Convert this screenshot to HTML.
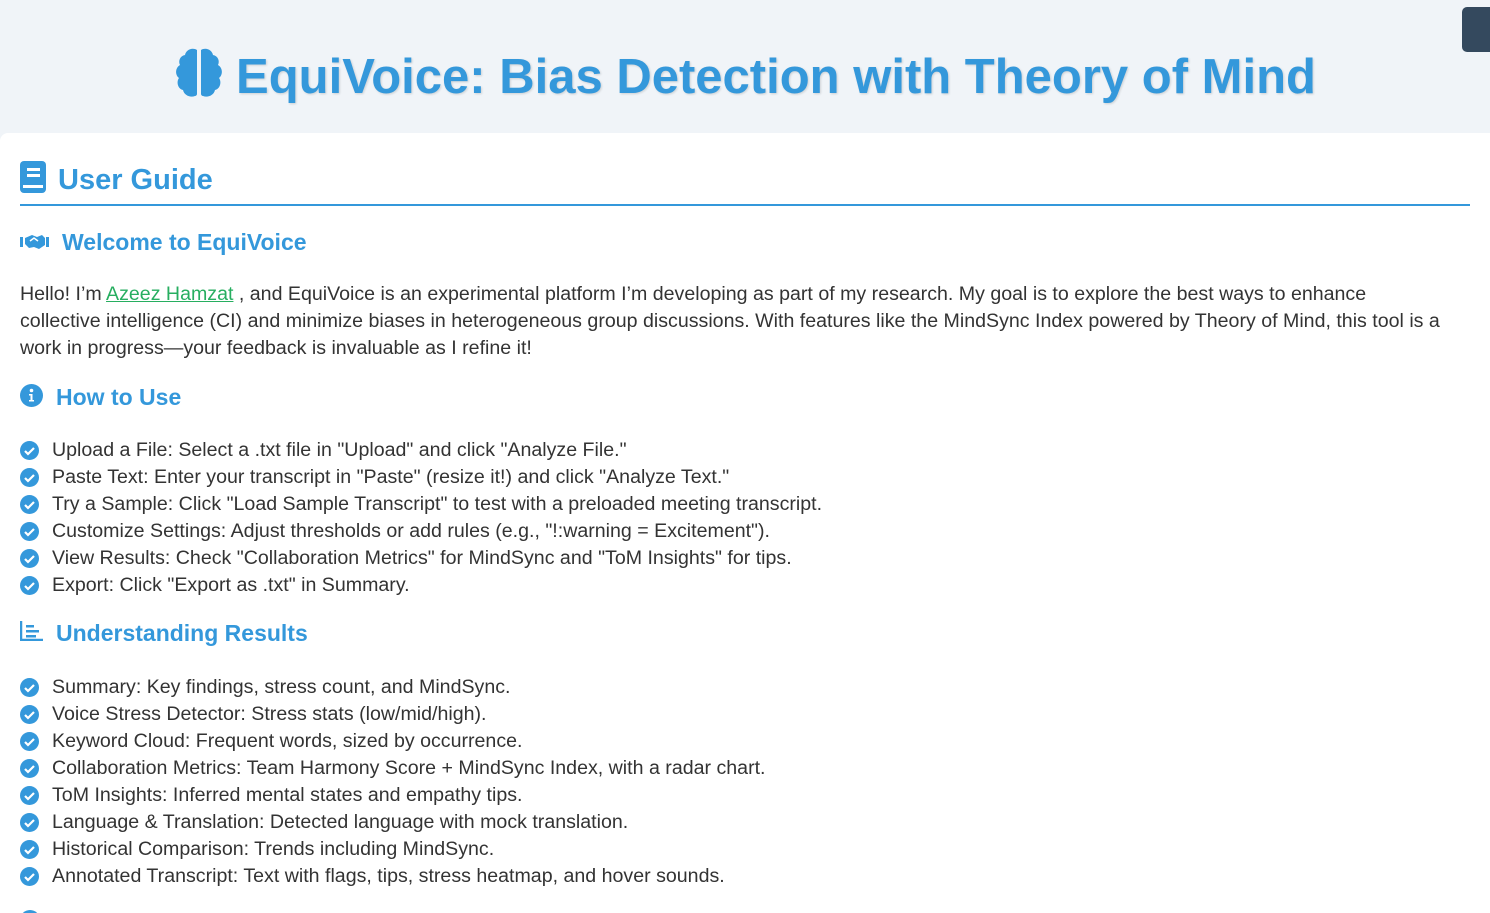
<!DOCTYPE html>
<html><head><meta charset="utf-8"><style>
html,body{margin:0;width:1490px;height:913px;overflow:hidden}
body{background:#f0f4f8;font-family:"Liberation Sans",sans-serif;color:#333;position:relative}
.hdr{position:absolute;left:0;top:0;width:1490px;height:140px}
.title{position:absolute;left:0;right:0;top:46px;text-align:center;font-size:49px;font-weight:bold;color:#3498db;text-shadow:1px 1px 2px rgba(0,0,0,.15);line-height:62px;white-space:nowrap}
.title svg{vertical-align:-6px;margin-right:12px}
.btn{position:absolute;left:1462px;top:7px;width:40px;height:45px;background:#34495e;border-radius:5px}
.card{position:absolute;left:0;top:133px;width:1490px;height:780px;background:#fff;border-radius:8px 0 0 0}
.abs{position:absolute;white-space:nowrap}
h2{margin:0;font-size:29px;color:#3498db;font-weight:bold}
h3{margin:0;font-size:23px;color:#3498db;font-weight:bold}
.p{font-size:19.6px;line-height:27px;left:20px}
a{color:#27ae60}
.li{font-size:19.6px;left:20px;line-height:27px}
.li svg{vertical-align:-4px;margin-right:13px}
</style></head><body>
<div class="hdr">
<div class="title"><svg width="50" height="52" viewBox="0 0 50 52"><path d="M23 3c-5-3-11 0-12 5-5 1-7 6-5 10-5 3-5 10-1 13-3 4-1 11 4 12 1 5 7 8 12 6 1 0 2-1 2-2V5c0-1 0-2 0-2z" fill="#3498db"/><path d="M27 3c5-3 11 0 12 5 5 1 7 6 5 10 5 3 5 10 1 13 3 4 1 11-4 12-1 5-7 8-12 6-1 0-2-1-2-2V5c0-1 0-2 0-2z" fill="#3498db"/></svg>EquiVoice: Bias Detection with Theory of Mind</div>
<div class="btn"></div>
</div>
<div class="card"></div>
<div class="abs" style="left:20px;top:161px"><h2><svg width="26" height="32" viewBox="0 0 26 32" style="vertical-align:-4px;margin-right:12px"><rect x="0" y="0" width="26" height="32" rx="4" fill="#3498db"/><rect x="7" y="7" width="13" height="3" fill="#fff"/><rect x="7" y="13" width="13" height="3" fill="#fff"/><rect x="3" y="24" width="20" height="3" fill="#fff"/></svg>User Guide</h2></div>
<div class="abs" style="left:20px;top:204px;width:1450px;height:2px;background:#3498db"></div>
<div class="abs" style="left:20px;top:229px"><h3><svg width="29" height="16" viewBox="0 0 29 16" style="vertical-align:0;margin-right:13px"><rect x="0" y="3" width="3" height="10" fill="#3498db"/><rect x="26" y="3" width="3" height="10" fill="#3498db"/><path d="M5 4l7-3 5 2 5-2 3 3v7l-6 4-5-2-5 1-4-4z" fill="#3498db"/><path d="M10 7l4-3 4 3" stroke="#fff" stroke-width="1.5" fill="none"/></svg>Welcome to EquiVoice</h3></div>
<div class="abs p" style="top:281px">Hello! I’m <a href="#">Azeez Hamzat</a> , and EquiVoice is an experimental platform I’m developing as part of my research. My goal is to explore the best ways to enhance<br>collective intelligence (CI) and minimize biases in heterogeneous group discussions. With features like the MindSync Index powered by Theory of Mind, this tool is a<br>work in progress—your feedback is invaluable as I refine it!</div>
<div class="abs" style="left:20px;top:384px"><h3><svg width="23" height="23" viewBox="0 0 23 23" style="vertical-align:-2px;margin-right:13px"><circle cx="11.5" cy="11.5" r="11.5" fill="#3498db"/><circle cx="11.5" cy="6.5" r="1.8" fill="#fff"/><path d="M9 10h3.5v6h1.5v1.5H9V16h1.5v-4.5H9z" fill="#fff"/></svg>How to Use</h3></div>
<div class="abs" style="left:20px;top:437px">
<div class="li"><svg width="19" height="19"><circle cx="9.5" cy="9.5" r="9.5" fill="#3498db"/><path d="M5 10l3 3 6-6" stroke="#fff" stroke-width="2.2" fill="none"/></svg>Upload a File: Select a .txt file in "Upload" and click "Analyze File."</div>
<div class="li"><svg width="19" height="19"><circle cx="9.5" cy="9.5" r="9.5" fill="#3498db"/><path d="M5 10l3 3 6-6" stroke="#fff" stroke-width="2.2" fill="none"/></svg>Paste Text: Enter your transcript in "Paste" (resize it!) and click "Analyze Text."</div>
<div class="li"><svg width="19" height="19"><circle cx="9.5" cy="9.5" r="9.5" fill="#3498db"/><path d="M5 10l3 3 6-6" stroke="#fff" stroke-width="2.2" fill="none"/></svg>Try a Sample: Click "Load Sample Transcript" to test with a preloaded meeting transcript.</div>
<div class="li"><svg width="19" height="19"><circle cx="9.5" cy="9.5" r="9.5" fill="#3498db"/><path d="M5 10l3 3 6-6" stroke="#fff" stroke-width="2.2" fill="none"/></svg>Customize Settings: Adjust thresholds or add rules (e.g., "!:warning = Excitement").</div>
<div class="li"><svg width="19" height="19"><circle cx="9.5" cy="9.5" r="9.5" fill="#3498db"/><path d="M5 10l3 3 6-6" stroke="#fff" stroke-width="2.2" fill="none"/></svg>View Results: Check "Collaboration Metrics" for MindSync and "ToM Insights" for tips.</div>
<div class="li"><svg width="19" height="19"><circle cx="9.5" cy="9.5" r="9.5" fill="#3498db"/><path d="M5 10l3 3 6-6" stroke="#fff" stroke-width="2.2" fill="none"/></svg>Export: Click "Export as .txt" in Summary.</div>
</div>
<div class="abs" style="left:20px;top:620px"><h3><svg width="23" height="20" viewBox="0 0 23 20" style="vertical-align:0;margin-right:13px"><path d="M1 0v19h22" stroke="#3498db" stroke-width="2.5" fill="none"/><rect x="6" y="4" width="8" height="2.5" fill="#3498db"/><rect x="6" y="9" width="13" height="2.5" fill="#3498db"/><rect x="6" y="14" width="10" height="2.5" fill="#3498db"/></svg>Understanding Results</h3></div>
<div class="abs" style="left:20px;top:674px">
<div class="li"><svg width="19" height="19"><circle cx="9.5" cy="9.5" r="9.5" fill="#3498db"/><path d="M5 10l3 3 6-6" stroke="#fff" stroke-width="2.2" fill="none"/></svg>Summary: Key findings, stress count, and MindSync.</div>
<div class="li"><svg width="19" height="19"><circle cx="9.5" cy="9.5" r="9.5" fill="#3498db"/><path d="M5 10l3 3 6-6" stroke="#fff" stroke-width="2.2" fill="none"/></svg>Voice Stress Detector: Stress stats (low/mid/high).</div>
<div class="li"><svg width="19" height="19"><circle cx="9.5" cy="9.5" r="9.5" fill="#3498db"/><path d="M5 10l3 3 6-6" stroke="#fff" stroke-width="2.2" fill="none"/></svg>Keyword Cloud: Frequent words, sized by occurrence.</div>
<div class="li"><svg width="19" height="19"><circle cx="9.5" cy="9.5" r="9.5" fill="#3498db"/><path d="M5 10l3 3 6-6" stroke="#fff" stroke-width="2.2" fill="none"/></svg>Collaboration Metrics: Team Harmony Score + MindSync Index, with a radar chart.</div>
<div class="li"><svg width="19" height="19"><circle cx="9.5" cy="9.5" r="9.5" fill="#3498db"/><path d="M5 10l3 3 6-6" stroke="#fff" stroke-width="2.2" fill="none"/></svg>ToM Insights: Inferred mental states and empathy tips.</div>
<div class="li"><svg width="19" height="19"><circle cx="9.5" cy="9.5" r="9.5" fill="#3498db"/><path d="M5 10l3 3 6-6" stroke="#fff" stroke-width="2.2" fill="none"/></svg>Language &amp; Translation: Detected language with mock translation.</div>
<div class="li"><svg width="19" height="19"><circle cx="9.5" cy="9.5" r="9.5" fill="#3498db"/><path d="M5 10l3 3 6-6" stroke="#fff" stroke-width="2.2" fill="none"/></svg>Historical Comparison: Trends including MindSync.</div>
<div class="li"><svg width="19" height="19"><circle cx="9.5" cy="9.5" r="9.5" fill="#3498db"/><path d="M5 10l3 3 6-6" stroke="#fff" stroke-width="2.2" fill="none"/></svg>Annotated Transcript: Text with flags, tips, stress heatmap, and hover sounds.</div>
</div>
<div class="abs" style="left:20px;top:910px;width:20px;height:20px;border-radius:50%;background:#3498db"></div>
</body></html>
